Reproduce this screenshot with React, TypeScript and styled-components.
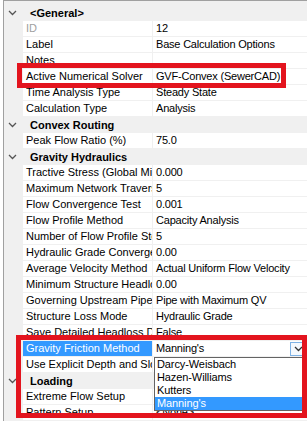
import React from "react";
import styled, { createGlobalStyle } from "styled-components";

const GlobalStyle = createGlobalStyle`
  html, body { margin: 0; padding: 0; background: #ffffff; }
  * { box-sizing: border-box; }
`;

const Frame = styled.div`
  position: relative;
  margin-left: 3px;
  width: 304px;
  height: 421px;
  border-top: 1px solid #a0a0a0;
  border-left: 1px solid #a0a0a0;
  background: #f0f0f0;
  padding-top: 4px;
  overflow: hidden;
  font-family: "Liberation Sans", Arial, sans-serif;
  font-size: 11px;
  color: #000;
`;

const Row = styled.div`
  display: grid;
  grid-template-columns: 19px 130px 1fr;
  height: 16px;
`;

const Margin = styled.div`
  display: flex;
  align-items: center;
  justify-content: center;
  padding-right: 2px;
`;

const CategoryLabel = styled.div`
  grid-column: 2 / 4;
  font-weight: bold;
  line-height: 16px;
  padding-left: 7px;
  white-space: nowrap;
`;

const NameCell = styled.div<{ $disabled?: boolean; $selected?: boolean }>`
  background: ${(p) => (p.$selected ? "#3399ff" : "#ffffff")};
  color: ${(p) => (p.$selected ? "#ffffff" : p.$disabled ? "#a0a0a0" : "#000000")};
  border-bottom: 1px solid #f0f0f0;
  border-right: 1px solid #f0f0f0;
  padding-left: 3px;
  line-height: 15px;
  white-space: nowrap;
  overflow: hidden;
`;

const ValueCell = styled.div`
  background: #ffffff;
  border-bottom: 1px solid #f0f0f0;
  padding-left: 3px;
  line-height: 15px;
  letter-spacing: -0.2px;
  white-space: nowrap;
  overflow: hidden;
`;

const Combo = styled.div`
  display: flex;
  align-items: center;
  justify-content: space-between;
  height: 15px;
  padding-right: 1px;
`;

const ComboButton = styled.div`
  width: 16px;
  height: 14px;
  border: 1px solid #7fb3e6;
  background: #f4f9fe;
  display: flex;
  align-items: center;
  justify-content: center;
`;

const DropList = styled.div`
  position: absolute;
  left: 150px;
  top: 356px;
  width: 150px;
  border: 1px solid #646464;
  background: #ffffff;
`;

const DropItem = styled.div<{ $selected?: boolean }>`
  height: 13px;
  line-height: 13px;
  padding-left: 2px;
  letter-spacing: -0.1px;
  background: ${(p) => (p.$selected ? "#3399ff" : "transparent")};
  color: ${(p) => (p.$selected ? "#ffffff" : "#000000")};
  white-space: nowrap;
`;

const Highlight = styled.div<{ $l: number; $t: number; $w: number; $h: number }>`
  position: absolute;
  left: ${(p) => p.$l}px;
  top: ${(p) => p.$t}px;
  width: ${(p) => p.$w}px;
  height: ${(p) => p.$h}px;
  border: 5px solid #e3141e;
  pointer-events: none;
`;

const Chevron = ({ color = "#555555" }: { color?: string }) => (
  <svg width="9" height="6" viewBox="0 0 9 6">
    <polyline points="1,1 4.5,4.5 8,1" fill="none" stroke={color} strokeWidth="1.3" />
  </svg>
);

type Item =
  | { kind: "cat"; label: string }
  | { kind: "prop"; name: string; value?: string; disabled?: boolean; selected?: boolean };

const items: Item[] = [
  { kind: "cat", label: "<General>" },
  { kind: "prop", name: "ID", value: "12", disabled: true },
  { kind: "prop", name: "Label", value: "Base Calculation Options" },
  { kind: "prop", name: "Notes", value: "" },
  { kind: "prop", name: "Active Numerical Solver", value: "GVF-Convex (SewerCAD)" },
  { kind: "prop", name: "Time Analysis Type", value: "Steady State" },
  { kind: "prop", name: "Calculation Type", value: "Analysis" },
  { kind: "cat", label: "Convex Routing" },
  { kind: "prop", name: "Peak Flow Ratio (%)", value: "75.0" },
  { kind: "cat", label: "Gravity Hydraulics" },
  { kind: "prop", name: "Tractive Stress (Global Minimum)", value: "0.000" },
  { kind: "prop", name: "Maximum Network Traversals", value: "5" },
  { kind: "prop", name: "Flow Convergence Test", value: "0.001" },
  { kind: "prop", name: "Flow Profile Method", value: "Capacity Analysis" },
  { kind: "prop", name: "Number of Flow Profile Steps", value: "5" },
  { kind: "prop", name: "Hydraulic Grade Convergence", value: "0.00" },
  { kind: "prop", name: "Average Velocity Method", value: "Actual Uniform Flow Velocity" },
  { kind: "prop", name: "Minimum Structure Headloss", value: "0.00" },
  { kind: "prop", name: "Governing Upstream Pipe", value: "Pipe with Maximum QV" },
  { kind: "prop", name: "Structure Loss Mode", value: "Hydraulic Grade" },
  { kind: "prop", name: "Save Detailed Headloss Data", value: "False" },
  { kind: "prop", name: "Gravity Friction Method", value: "Manning's", selected: true },
  { kind: "prop", name: "Use Explicit Depth and Slope", value: "False" },
  { kind: "cat", label: "Loading" },
  { kind: "prop", name: "Extreme Flow Setup", value: "<None>" },
  { kind: "prop", name: "Pattern Setup", value: "<None>" },
];

const options = ["Darcy-Weisbach", "Hazen-Williams", "Kutters", "Manning's"];

export default function App() {
  return (
    <>
      <GlobalStyle />
      <Frame>
        {items.map((it, i) =>
          it.kind === "cat" ? (
            <Row key={i}>
              <Margin>
                <Chevron />
              </Margin>
              <CategoryLabel>{it.label}</CategoryLabel>
            </Row>
          ) : (
            <Row key={i}>
              <Margin />
              <NameCell $disabled={it.disabled} $selected={it.selected}>
                {it.name}
              </NameCell>
              <ValueCell>
                {it.selected ? (
                  <Combo>
                    <span>{it.value}</span>
                    <ComboButton>
                      <Chevron color="#333333" />
                    </ComboButton>
                  </Combo>
                ) : (
                  it.value
                )}
              </ValueCell>
            </Row>
          )
        )}
        <DropList>
          {options.map((o) => (
            <DropItem key={o} $selected={o === "Manning's"}>
              {o}
            </DropItem>
          ))}
        </DropList>
        <Highlight $l={13} $t={62} $w={269} $h={25} />
        <Highlight $l={12} $t={334} $w={291} $h={83} />
      </Frame>
    </>
  );
}
